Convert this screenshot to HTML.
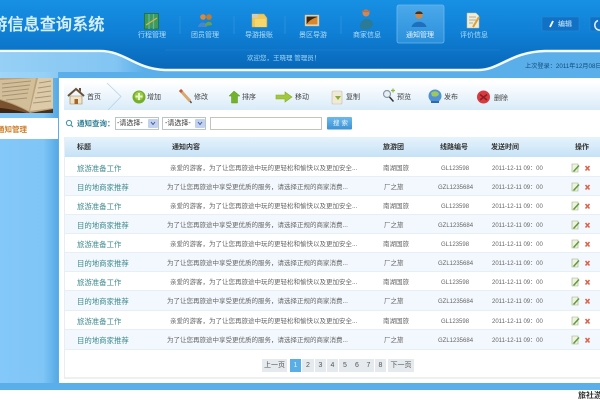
<!DOCTYPE html>
<html><head><meta charset="utf-8"><style>
*{box-sizing:border-box}
html,body{margin:0;padding:0;width:600px;height:400px;overflow:hidden;background:#fff}
body{position:relative;font-family:"Liberation Sans","WenQuanYi Zen Hei","Noto Sans CJK SC",sans-serif;font-size:7px;color:#333;filter:blur(.35px)}
.a{position:absolute;white-space:nowrap;line-height:10px;transform:translateY(1px)}
svg{position:absolute;overflow:visible}
.nl{color:#b4def7;font-size:7px;text-align:center;width:50px}
.tb{font-size:7px;color:#444}
.row{position:absolute;left:65px;width:535px;border-bottom:1px solid #e6eff6}
.t{position:absolute;left:12px;top:6px;font-size:7.4px;color:#3f8a8f;white-space:nowrap;line-height:10px}
.c{position:absolute;top:6px;font-size:6.5px;color:#666;white-space:nowrap;line-height:10px}
.h{position:absolute;top:143px;font-size:7px;font-weight:bold;color:#333;line-height:10px;white-space:nowrap}
.p{position:absolute;top:359px;height:13px;background:#e4eaee;color:#555;font-size:7px;line-height:13px;text-align:center}
.g{font-size:6px;left:376px}
.gz{font-size:6px;left:373px}
.d{font-size:6px;left:427px}
</style></head><body>
<svg width="600" height="400" style="left:0;top:0">
<defs>
<linearGradient id="top" x1="0" y1="0" x2="0" y2="1"><stop offset="0" stop-color="#1790e3"/><stop offset=".45" stop-color="#0f80d6"/><stop offset="1" stop-color="#0867b8"/></linearGradient>
<linearGradient id="lt" x1="0" y1="0" x2="1" y2="0"><stop offset="0" stop-color="#a5d8f8"/><stop offset=".8" stop-color="#8ccbf5"/><stop offset="1" stop-color="#5aaeea"/></linearGradient>
<linearGradient id="side" x1="0" y1="0" x2="1" y2="0"><stop offset="0" stop-color="#83c8f8"/><stop offset=".75" stop-color="#7fc5f6"/><stop offset="1" stop-color="#55a9e4"/></linearGradient>
<linearGradient id="tbg" x1="0" y1="0" x2="0" y2="1"><stop offset="0" stop-color="#fdfeff"/><stop offset="1" stop-color="#d9ebf8"/></linearGradient>
<linearGradient id="hbg" x1="0" y1="0" x2="0" y2="1"><stop offset="0" stop-color="#e6f3fc"/><stop offset="1" stop-color="#c6e2f6"/></linearGradient>
<linearGradient id="btn" x1="0" y1="0" x2="0" y2="1"><stop offset="0" stop-color="#6cb9ec"/><stop offset="1" stop-color="#3d92d4"/></linearGradient>
<linearGradient id="act" x1="0" y1="0" x2="0" y2="1"><stop offset="0" stop-color="#4ba9ea"/><stop offset="1" stop-color="#2a8fdb"/></linearGradient>
</defs>
<rect width="600" height="78" fill="url(#top)"/>
<rect y="50" width="600" height="340" fill="#5aaeea"/>
<path d="M0 51H100C125 51 135 69 165 70H478C500 70 510 52 545 51H600V78H0Z" fill="#5aaeea"/>
<path d="M0 0H600V51H545C510 52 500 70 478 70H165C135 69 125 51 100 51H0Z" fill="url(#top)"/>
<path d="M0 51H100C125 51 135 69 165 70H478C500 70 510 52 545 51H600" fill="none" stroke="#fff" stroke-width="2.5" opacity=".95"/>
<path d="M165 50H500" stroke="#3a96d8" stroke-width=".5" opacity=".5"/>
<path d="M180 16V34M234 16V34M285 16V34M341 16V34" stroke="#2f94dc" stroke-width=".8"/>

<rect y="72" width="58" height="313" fill="url(#side)"/>
<path d="M0 52.500H100C118 53 130 61 145 70V72H58V78H0Z" fill="url(#lt)" opacity=".8"/>

<!-- book -->
<rect x="0" y="78" width="53" height="35" fill="#b9a27c"/>
<path d="M0 80L36 78L29 111C20 106 8 101 0 99Z" fill="#d2bf9a"/>
<path d="M38 78H53V108L30 111Z" fill="#dccaa8"/>
<path d="M2 84L31 81M2 88L30 85M2 92L29 89M2 96L28 93M6 100L27 98M39 83L51 81M38 88L51 86M37 93L51 91M35 98L51 96M33 103L51 101" stroke="#8f7b5a" stroke-width="1" opacity=".65"/>
<path d="M0 100C10 103 22 108 29 112L30 113H0Z" fill="#7a5230"/>
<path d="M0 108C10 109 20 111 27 113H0Z" fill="#3e2612"/>
<path d="M30 113L53 109V113Z" fill="#4a3018"/>
<rect y="118" width="58" height="21" fill="#fff"/>

<rect x="59" y="78" width="541" height="306" fill="#fff"/>
<rect y="383" width="600" height="8" fill="#5aaeea"/>
<rect x="0" y="390" width="600" height="10" fill="#fff"/>
<rect x="64" y="83" width="536" height="27" fill="url(#tbg)"/>
<path d="M107 83L121 96.500L108 110" fill="none" stroke="#b5d4e8" stroke-width=".8"/>

<!-- home -->
<path d="M68 96L76 89L84 96" fill="none" stroke="#6b5138" stroke-width="2"/>
<path d="M70 96H82V104H70Z" fill="#f0e4c8" stroke="#9a8362" stroke-width=".6"/>
<rect x="74.500" y="99" width="3.500" height="5" fill="#a5642a"/>
<path d="M79 88H81V92L79 90Z" fill="#6b5138"/>
<!-- add -->
<circle cx="139" cy="97" r="6.500" fill="#75ae2c"/>
<circle cx="139" cy="96" r="4.500" fill="#9bcb45"/>
<path d="M139 93V100M135.500 96.500H142.500" stroke="#e8f6c6" stroke-width="2"/>
<!-- pencil -->
<path d="M180 90L190 101" stroke="#d9a86f" stroke-width="3"/>
<path d="M180 90L182 92" stroke="#c65a3c" stroke-width="3"/>
<path d="M190 101L191.500 103" stroke="#555" stroke-width="1.500"/>
<!-- up arrow -->
<path d="M234 91L240 96H237.500V103H231.500V96H229Z" fill="#74b12c" stroke="#5b9a1e" stroke-width=".5"/>
<!-- move -->
<path d="M276 95H285V92L292 97L285 102V99H276Z" fill="#a4c83c" stroke="#86aa28" stroke-width=".6"/>
<!-- copy -->
<rect x="332" y="91" width="10" height="13" rx="1" fill="#efe9d6" stroke="#c4bda4" stroke-width=".6"/>
<path d="M335 96H341L338 100Z" fill="#8aac36"/>
<!-- preview -->
<circle cx="387" cy="94" r="3.500" fill="#e8eef4" stroke="#8a9aa8" stroke-width="1.200"/>
<path d="M389.500 97L393.500 101.500" stroke="#333" stroke-width="1.500"/>
<path d="M391 90.500H395M393 88.500V92.500" stroke="#92b844" stroke-width="1.200"/>
<!-- globe -->
<circle cx="435" cy="96" r="6.500" fill="#4f91d4"/>
<path d="M431 93C434 90 438 91 439 94C438 97 434 97 432 96Z" fill="#9ec95a"/>
<path d="M431 101H439V103H431Z" fill="#2a6bb0"/>
<!-- delete -->
<circle cx="483.500" cy="97" r="6.500" fill="#d73a3f"/>
<path d="M480 94.500L487 100M487 94.500L480 100" stroke="#8c1d22" stroke-width="1.500"/>

<!-- search -->
<circle cx="69" cy="123" r="2.600" fill="none" stroke="#3f8fb0" stroke-width="1"/>
<path d="M71 125L73 127" stroke="#3f8fb0" stroke-width="1.100"/>
<rect x="115.500" y="117.500" width="43" height="12" fill="#fff" stroke="#b9c4cc"/>
<rect x="148" y="119" width="10" height="9" rx="1" fill="#c3d1ee"/>
<path d="M151 122L153 124.500L155 122" fill="none" stroke="#3b5aa0" stroke-width="1"/>
<rect x="162.500" y="117.500" width="43" height="12" fill="#fff" stroke="#b9c4cc"/>
<rect x="195" y="119" width="10" height="9" rx="1" fill="#c3d1ee"/>
<path d="M198 122L200 124.500L202 122" fill="none" stroke="#3b5aa0" stroke-width="1"/>
<rect x="210.500" y="117.500" width="111" height="12" fill="#fff" stroke="#c4c4b8"/>
<rect x="327" y="117" width="25" height="12.500" rx="1" fill="url(#btn)"/>

<rect x="64" y="137" width="536" height="20" fill="url(#hbg)"/>
<rect x="64" y="377" width="536" height="2" fill="#eef0f0"/>
<rect x="64" y="137" width="1" height="241" fill="#e8eff4"/>

<!-- nav icons -->
<rect x="144.500" y="13.500" width="14" height="15.500" fill="#3f9a58" stroke="#1f6f3a" stroke-width=".8"/>
<path d="M149 14V29M153.500 14V29" stroke="#5fb5a0" stroke-width="1.300"/>
<path d="M146 25L157 18" stroke="#d8b450" stroke-width="1.200"/>
<circle cx="203" cy="17" r="2.800" fill="#d88a3c"/><circle cx="209" cy="17" r="2.800" fill="#c87a2c"/>
<path d="M198 27C199 21 207 21 207 27Z" fill="#4c86c8"/><path d="M205 26C205 21 212 20 212 25Z" fill="#6aa04a"/>
<path d="M252 14H264L267 18V27H252Z" fill="#edc85c" stroke="#cfa43c" stroke-width=".5"/>
<rect x="255" y="19" width="11" height="8" fill="#f7d76a"/>
<path d="M252 14H258V18H252Z" fill="#d8ccb0"/>
<rect x="305" y="15" width="14" height="11" fill="#e9dfc4" stroke="#b3a98c" stroke-width=".5"/>
<rect x="306.500" y="16.500" width="11" height="8" fill="#3b2410"/>
<path d="M306.500 24.500C309 20 314 18 317.500 17V24.500Z" fill="#d9872a"/>
<circle cx="366" cy="13" r="3.500" fill="#c88a5c"/>
<path d="M362 10.500H370V12H362Z" fill="#c86a3c"/>
<path d="M360 28C359 19 370 15 373 24C373 27 368 30 364 29.500Z" fill="#2b7a96"/>
<rect x="397" y="5" width="47" height="38" rx="2" fill="url(#act)" stroke="#6ab8ee" stroke-width=".8"/>
<circle cx="419" cy="15" r="3.800" fill="#c88a4c"/>
<path d="M415.200 14C415.500 10.500 422.500 10.500 422.800 14Z" fill="#4a3018"/>
<path d="M411.500 27C413 20 425 20 426.500 27Z" fill="#1f6fc0"/>
<path d="M467 13H476L479 16V28H467Z" fill="#f0ecd8" stroke="#c0b890" stroke-width=".5"/>
<path d="M469 17H476M469 20H476M469 23H473" stroke="#9a9a8a" stroke-width=".7"/>
<path d="M473 27L479 17" stroke="#e0a030" stroke-width="2"/>

<rect x="542" y="17" width="37" height="14" rx="1" fill="#1171c4" stroke="#2b8ad2" stroke-width=".6"/>
<rect x="590" y="17" width="20" height="14" rx="1" fill="#1171c4" stroke="#2b8ad2" stroke-width=".6"/>
<path d="M550 27L553 21" stroke="#fff" stroke-width="1.800"/>
<path d="M598 20.500A5 5 0 1 0 603 29" fill="none" stroke="#dff1fc" stroke-width="1.500"/>
</svg>

<div class="a" style="left:-25px;top:12px;font-size:16.200px;line-height:24px;font-weight:bold;color:#d5eefc">旅游信息查询系统</div>
<div class="a nl" style="left:127px;top:30px">行程管理</div>
<div class="a nl" style="left:180px;top:30px">团员管理</div>
<div class="a nl" style="left:234px;top:30px">导游报账</div>
<div class="a nl" style="left:288px;top:30px">景区导游</div>
<div class="a nl" style="left:342px;top:30px">商家信息</div>
<div class="a nl" style="left:395px;top:30px;color:#eaf6fd">通知管理</div>
<div class="a nl" style="left:449px;top:30px">评价信息</div>
<div class="a" style="left:247px;top:53px;color:#a5d8f5;font-size:6.500px">欢迎您，王晓理 管理员！</div>
<div class="a" style="left:525px;top:61px;color:#124c7c;font-size:6.200px">上次登录：2011年12月08日</div>
<div class="a" style="left:558px;top:19px;color:#d6eefc;font-size:7px">编辑</div>
<div class="a" style="left:-3px;top:124px;color:#d0822c;font-size:7.500px;font-weight:bold">通知管理</div>

<div class="a tb" style="left:87px;top:92px">首页</div>
<div class="a tb" style="left:147px;top:92px">增加</div>
<div class="a tb" style="left:194px;top:92px">修改</div>
<div class="a tb" style="left:242px;top:92px">排序</div>
<div class="a tb" style="left:295px;top:92px">移动</div>
<div class="a tb" style="left:346px;top:92px">复制</div>
<div class="a tb" style="left:397px;top:92px">预览</div>
<div class="a tb" style="left:444px;top:92px">发布</div>
<div class="a tb" style="left:494px;top:93px">删除</div>

<div class="a" style="left:77px;top:118px;font-size:7.500px;color:#2f7f96;font-weight:bold">通知查询：</div>
<div class="a" style="left:117px;top:118px;font-size:7px;color:#333">-请选择-</div>
<div class="a" style="left:165px;top:118px;font-size:7px;color:#333">-请选择-</div>
<div class="a" style="left:333px;top:118px;font-size:6.500px;color:#eaf5fc;letter-spacing:2px">搜索</div>

<div class="h" style="left:77px">标题</div>
<div class="h" style="left:172px">通知内容</div>
<div class="h" style="left:383px">旅游团</div>
<div class="h" style="left:440px">线路编号</div>
<div class="h" style="left:491px">发送时间</div>
<div class="h" style="left:575px">操作</div>

<div class="row" style="top:158px;height:19px;background:#fff"><div class="t">旅游准备工作</div><div class="c" style="left:105px">亲爱的游客，为了让您再旅途中玩的更轻松和愉快以及更加安全...</div><div class="c" style="left:318px">南湖国旅</div><div class="c g">GL123598</div><div class="c d">2011-12-11 09：00</div></div>
<div class="row" style="top:177px;height:19px;background:#f2f8fd"><div class="t">目的地商家推荐</div><div class="c" style="left:102px">为了让您再旅途中享受更优质的服务，请选择正规的商家消费...</div><div class="c" style="left:319px">厂之旅</div><div class="c gz">GZL1235684</div><div class="c d">2011-12-11 09：00</div></div>
<div class="row" style="top:196px;height:19px;background:#fff"><div class="t">旅游准备工作</div><div class="c" style="left:105px">亲爱的游客，为了让您再旅途中玩的更轻松和愉快以及更加安全...</div><div class="c" style="left:318px">南湖国旅</div><div class="c g">GL123598</div><div class="c d">2011-12-11 09：00</div></div>
<div class="row" style="top:215px;height:19px;background:#f2f8fd"><div class="t">目的地商家推荐</div><div class="c" style="left:102px">为了让您再旅途中享受更优质的服务，请选择正规的商家消费...</div><div class="c" style="left:319px">厂之旅</div><div class="c gz">GZL1235684</div><div class="c d">2011-12-11 09：00</div></div>
<div class="row" style="top:234px;height:19px;background:#fff"><div class="t">旅游准备工作</div><div class="c" style="left:105px">亲爱的游客，为了让您再旅途中玩的更轻松和愉快以及更加安全...</div><div class="c" style="left:318px">南湖国旅</div><div class="c g">GL123598</div><div class="c d">2011-12-11 09：00</div></div>
<div class="row" style="top:253px;height:19px;background:#f2f8fd"><div class="t">目的地商家推荐</div><div class="c" style="left:102px">为了让您再旅途中享受更优质的服务，请选择正规的商家消费...</div><div class="c" style="left:319px">厂之旅</div><div class="c gz">GZL1235684</div><div class="c d">2011-12-11 09：00</div></div>
<div class="row" style="top:272px;height:19px;background:#fff"><div class="t">旅游准备工作</div><div class="c" style="left:105px">亲爱的游客，为了让您再旅途中玩的更轻松和愉快以及更加安全...</div><div class="c" style="left:318px">南湖国旅</div><div class="c g">GL123598</div><div class="c d">2011-12-11 09：00</div></div>
<div class="row" style="top:291px;height:20px;background:#f2f8fd"><div class="t">目的地商家推荐</div><div class="c" style="left:102px">为了让您再旅途中享受更优质的服务，请选择正规的商家消费...</div><div class="c" style="left:319px">厂之旅</div><div class="c gz">GZL1235684</div><div class="c d">2011-12-11 09：00</div></div>
<div class="row" style="top:311px;height:19px;background:#fff"><div class="t">旅游准备工作</div><div class="c" style="left:105px">亲爱的游客，为了让您再旅途中玩的更轻松和愉快以及更加安全...</div><div class="c" style="left:318px">南湖国旅</div><div class="c g">GL123598</div><div class="c d">2011-12-11 09：00</div></div>
<div class="row" style="top:330px;height:20px;background:#f2f8fd"><div class="t">目的地商家推荐</div><div class="c" style="left:102px">为了让您再旅途中享受更优质的服务，请选择正规的商家消费...</div><div class="c" style="left:319px">厂之旅</div><div class="c gz">GZL1235684</div><div class="c d">2011-12-11 09：00</div></div>

<svg width="600" height="400" style="left:0;top:0">
<defs>
<g id="ops">
<path d="M572 0H578V8H572Z" fill="#eef2e2" stroke="#9ab07a" stroke-width=".6"/>
<path d="M573.500 7.500L579 1.500" stroke="#5f9a3a" stroke-width="1.500"/>
<path d="M585.500 2L589.500 6.500M589.500 2L585.500 6.500" stroke="#d9654f" stroke-width="1.600"/>
</g>
</defs>
<use href="#ops" y="164"/><use href="#ops" y="183"/><use href="#ops" y="202"/><use href="#ops" y="221"/><use href="#ops" y="240"/><use href="#ops" y="259"/><use href="#ops" y="278"/><use href="#ops" y="297"/><use href="#ops" y="317"/><use href="#ops" y="336"/>
</svg>

<div class="p" style="left:262px;width:25px">上一页</div>
<div class="p" style="left:290px;width:11px;background:#5aaee6;color:#d7effc">1</div>
<div class="p" style="left:302px;width:12px">2</div>
<div class="p" style="left:315px;width:11px">3</div>
<div class="p" style="left:327px;width:11px">4</div>
<div class="p" style="left:339px;width:12px">5</div>
<div class="p" style="left:351px;width:12px">6</div>
<div class="p" style="left:363px;width:11px">7</div>
<div class="p" style="left:375px;width:11px">8</div>
<div class="p" style="left:388px;width:26px">下一页</div>
<div class="a" style="left:578px;top:390px;font-size:8px;font-weight:bold;color:#333">旅社游</div>
</body></html>
